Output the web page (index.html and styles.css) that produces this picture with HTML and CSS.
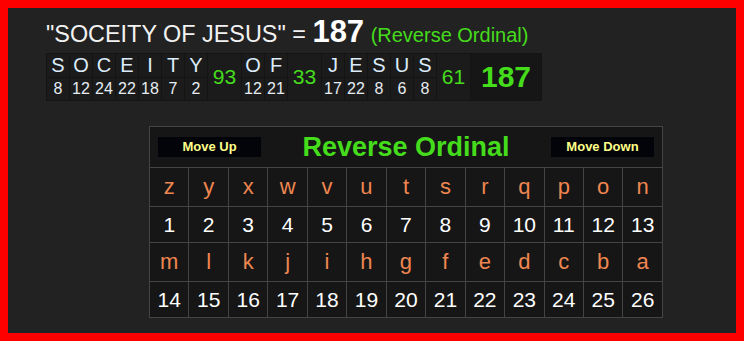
FILE: index.html
```html
<!DOCTYPE html>
<html>
<head>
<meta charset="utf-8">
<link rel="stylesheet" href="styles.css">
</head>
<body>
<div class="frame">
  <div class="title">"SOCEITY OF JESUS" = <b class="total">187</b> <span class="cipher">(Reverse Ordinal)</span></div>
  <table class="breakdown">
    <tr>
      <td class="l">S</td><td class="l">O</td><td class="l">C</td><td class="l">E</td><td class="l">I</td><td class="l">T</td><td class="l">Y</td>
      <td class="sum" rowspan="2">93</td>
      <td class="l">O</td><td class="l">F</td>
      <td class="sum" rowspan="2">33</td>
      <td class="l">J</td><td class="l">E</td><td class="l">S</td><td class="l">U</td><td class="l">S</td>
      <td class="sum" rowspan="2">61</td>
      <td class="grand" rowspan="2">187</td>
    </tr>
    <tr>
      <td class="n">8</td><td class="n">12</td><td class="n">24</td><td class="n">22</td><td class="n">18</td><td class="n">7</td><td class="n">2</td>
      <td class="n">12</td><td class="n">21</td>
      <td class="n">17</td><td class="n">22</td><td class="n">8</td><td class="n">6</td><td class="n">8</td>
    </tr>
  </table>
  <table class="cipher-grid">
    <tr class="head">
      <td colspan="13">
        <div class="head-row">
          <span class="btn">Move Up</span>
          <span class="grid-title">Reverse Ordinal</span>
          <span class="btn">Move Down</span>
        </div>
      </td>
    </tr>
    <tr class="lt"><td>z</td><td>y</td><td>x</td><td>w</td><td>v</td><td>u</td><td>t</td><td>s</td><td>r</td><td>q</td><td>p</td><td>o</td><td>n</td></tr>
    <tr class="nm"><td>1</td><td>2</td><td>3</td><td>4</td><td>5</td><td>6</td><td>7</td><td>8</td><td>9</td><td>10</td><td>11</td><td>12</td><td>13</td></tr>
    <tr class="lt"><td>m</td><td>l</td><td>k</td><td>j</td><td>i</td><td>h</td><td>g</td><td>f</td><td>e</td><td>d</td><td>c</td><td>b</td><td>a</td></tr>
    <tr class="nm"><td>14</td><td>15</td><td>16</td><td>17</td><td>18</td><td>19</td><td>20</td><td>21</td><td>22</td><td>23</td><td>24</td><td>25</td><td>26</td></tr>
  </table>
</div>
</body>
</html>
```

FILE: styles.css
```css
html, body {
  margin: 0;
  padding: 0;
}
body {
  font-family: "Liberation Sans", Arial, sans-serif;
}
.frame {
  box-sizing: border-box;
  width: 744px;
  height: 341px;
  border: 8px solid #ff0000;
  background: #222222;
  padding: 10px 0 0 38px;
}
.title {
  height: 27px;
  font-size: 23.4px;
  line-height: 27px;
  color: #f2f2f2;
  white-space: nowrap;
}
.total {
  font-weight: bold;
  font-size: 31px;
  color: #ffffff;
}
.cipher {
  font-size: 20px;
  color: #45dc1c;
}
.breakdown {
  margin-top: 8px;
  border-collapse: collapse;
  background: #1b1b1b;
}
.breakdown td {
  border: 1px solid #141414;
  padding: 0;
  text-align: center;
  width: 22px;
}
.breakdown td.l {
  height: 23px;
  font-size: 20px;
  color: #dcecfb;
  line-height: 23px;
}
.breakdown td.n {
  height: 22px;
  font-size: 16px;
  color: #e6ecf2;
  line-height: 22px;
}
.breakdown td.sum {
  width: 33px;
  font-size: 21px;
  color: #45dc1c;
  background: #1b1b1b;
}
.breakdown td.grand {
  width: 70px;
  font-size: 30px;
  font-weight: bold;
  color: #45dc1c;
  background: #161616;
}
.cipher-grid {
  margin: 25px 0 0 103px;
  border-collapse: collapse;
  table-layout: fixed;
  width: 514px;
  background: #161616;
}
.cipher-grid td {
  border: 1px solid #444444;
  padding: 0;
  text-align: center;
}
.cipher-grid tr.head td {
  height: 40px;
}
.head-row {
  display: flex;
  align-items: center;
  justify-content: space-between;
  padding: 0 8px;
}
.btn {
  width: 103px;
  height: 20px;
  line-height: 20px;
  background: #03030a;
  color: #ffff88;
  font-weight: bold;
  font-size: 13px;
  text-align: center;
}
.grid-title {
  font-size: 27px;
  font-weight: bold;
  color: #45dc1c;
}
.cipher-grid tr.lt td {
  height: 38px;
  font-size: 22px;
  color: #ef8650;
}
.cipher-grid tr.nm td {
  height: 35px;
  font-size: 21px;
  color: #ffffff;
}
```
